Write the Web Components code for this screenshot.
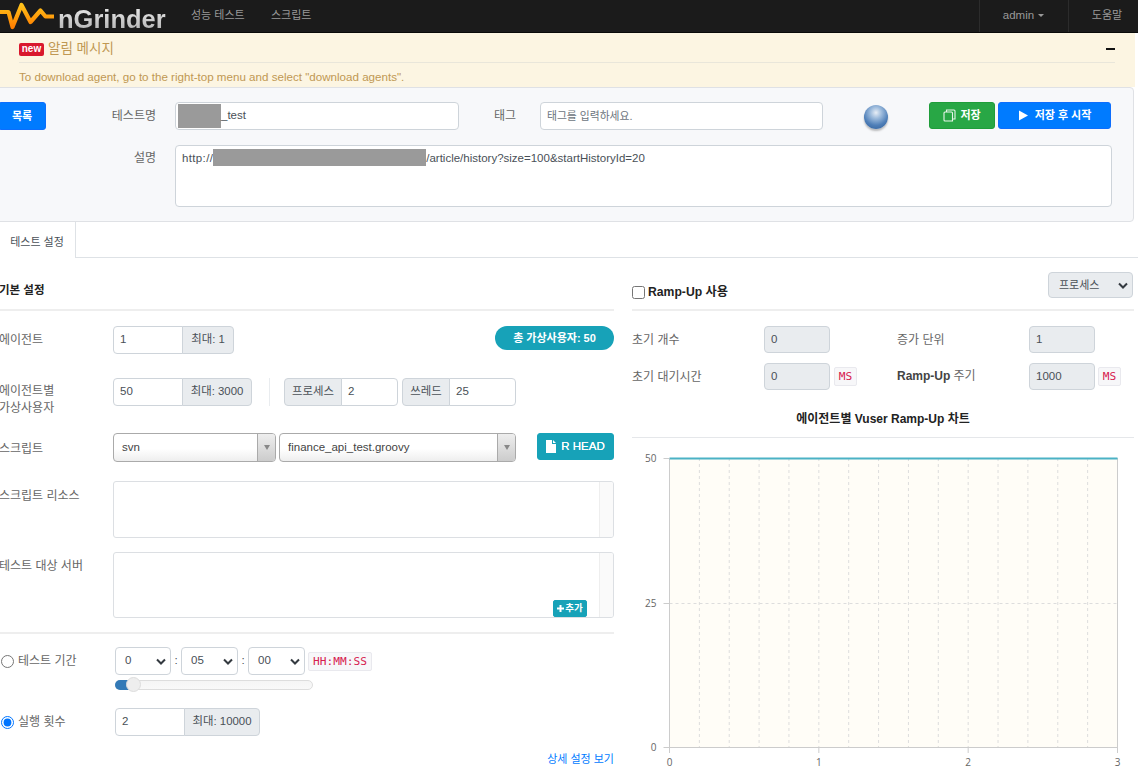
<!DOCTYPE html>
<html lang="ko">
<head>
<meta charset="utf-8">
<title>nGrinder</title>
<style>
html, body { margin: 0; height: 100%; overflow: hidden; background: #fff; }
body { width: 1138px; height: 774px; font: 11.5px/1.5 "Liberation Sans", "Noto Sans CJK KR", sans-serif; color: #495057; }
</style>
</head>
<body>
<ng-navbar></ng-navbar>
<ng-alert></ng-alert>
<ng-test-header></ng-test-header>
<ng-tabs></ng-tabs>
<ng-main>
  <ng-basic-settings slot="left"></ng-basic-settings>
  <ng-rampup-settings slot="right"></ng-rampup-settings>
</ng-main>

<script>
// Every element renders its own css + html into an open shadow root
class NgElement extends HTMLElement {
    connectedCallback() {
        if (this.shadowRoot) return;
        this.attachShadow({mode: 'open'});
        this.shadowRoot.innerHTML = `<style>:host, * { box-sizing: border-box; } ${this.css()}</style>${this.html()}`;
    }
    css() { return ''; }
    html() { return '<slot></slot>'; }
    attr(name, fallback = '') { return this.getAttribute(name) ?? fallback; }
}

const CHEVRON = `<svg width="10" height="7" viewBox="0 0 10 7"><path d="M1 1.5 L5 5.5 L9 1.5" fill="none" stroke="#343a40" stroke-width="2"/></svg>`;

class NgNavbar extends NgElement {
    css() {
        return `
:host { display: flex; align-items: stretch; height: 33px; background: #1b1b1b; border-bottom: 1px solid #0a0a0a; color: #999; position: relative; overflow: hidden; }
.logo { display: flex; width: 191px; align-items: center; position: relative; }
.logo svg { flex: none; }
.logo b { font-size: 25.5px; line-height: 33px; margin: 6px 0 0 4px; background: linear-gradient(#f2f2f2, #a9a9a9); -webkit-background-clip: text; background-clip: text; color: transparent; }
.nav { line-height: 31px; font-size: 11px; }
.nav.first { width: 80px; }
.spacer { flex: 1; }
.cell { border-left: 1px solid #2c2c2c; line-height: 31px; text-align: center; }
.admin { width: 89px; padding-right: 1px; }
.help { width: 70px; padding-left: 7px; font-size: 11px; }
.caret { display: inline-block; border: 3px solid transparent; border-top-color: #999; border-bottom: 0; margin-left: 4px; vertical-align: 2px; }`;
    }
    html() {
        return `
<div class="logo">
  <svg width="54" height="32" viewBox="0 0 54 32">
    <defs><linearGradient id="wave" x1="0" y1="0" x2="0" y2="1"><stop offset="0" stop-color="#ffc21a"/><stop offset="1" stop-color="#ff7f00"/></linearGradient></defs>
    <path d="M0 12 H8.5 L12.5 27 L21.5 5 L30.5 22 L40.5 10.5 L45.5 16.5 H54" fill="none" stroke="url(#wave)" stroke-width="4.2" stroke-linejoin="round"/>
  </svg>
  <b>nGrinder</b>
</div>
<div class="nav first">성능 테스트</div>
<div class="nav">스크립트</div>
<div class="spacer"></div>
<div class="cell admin">admin<span class="caret"></span></div>
<div class="cell help">도움말</div>`;
    }
}

class NgAlert extends NgElement {
    css() {
        return `
:host { display: block; width: 1135px; height: 54px; background: #fcf5e2; color: #c09853; padding: 0 20px 0 19px; }
.head { display: flex; align-items: center; height: 30px; border-bottom: 1px solid #e9e6da; padding-top: 3px; }
.badge { background: #d9182d; color: #fff; font: bold 10px/12px "Liberation Sans", sans-serif; width: 25px; height: 13px; border-radius: 2px; text-align: center; margin-right: 4px; }
.title { font-size: 13.5px; flex: 1; }
.min { width: 9px; height: 2px; background: #111; }
.msg { line-height: 28px; font-size: 11.6px; white-space: nowrap; }`;
    }
    html() {
        return `
<div class="head"><span class="badge">new</span><span class="title">알림 메시지</span><span class="min"></span></div>
<div class="msg">To download agent, go to the right-top menu and select "download agents".</div>`;
    }
}

class NgBox extends NgElement {
    css() {
        return `
:host { display: flex; flex: none; align-items: center; width: var(--w, 100px); height: var(--h, 28px); background: #fff; border: 1px solid #ced4da; border-radius: 4px; padding: 0 6px; color: #495057; white-space: nowrap; overflow: hidden; }
:host([disabled]) { background: #e9ecef; }
:host([area]) { align-items: flex-start; padding-top: 3px; }`;
    }
}

class NgInputGroup extends NgElement {
    css() {
        return `
:host { display: flex; flex: none; height: 28px; }
div { display: flex; align-items: center; border: 1px solid #ced4da; white-space: nowrap; }
.value { background: #fff; padding-left: 6px; color: #495057; }
.addon { background: #e9ecef; justify-content: center; color: #495057; font-size: 11.4px; }
.first { border-radius: 4px 0 0 4px; }
.last { border-radius: 0 4px 4px 0; margin-left: -1px; }`;
    }
    html() {
        const value = `style="width:${this.attr('value-width')}px"`;
        const addon = `style="width:${this.attr('addon-width')}px"`;
        if (this.hasAttribute('addon-first')) {
            return `<div class="addon first" ${addon}>${this.attr('addon')}</div><div class="value last" ${value}>${this.attr('value')}</div>`;
        }
        return `<div class="value first" ${value}>${this.attr('value')}</div><div class="addon last" ${addon}>${this.attr('addon')}</div>`;
    }
}

class NgButton extends NgElement {
    css() {
        return `
:host { display: inline-flex; flex: none; align-items: center; justify-content: center; gap: 4px; height: 28px; width: var(--w, auto); border-radius: 3px; color: #fff; font-weight: bold; font-size: 11px; white-space: nowrap; background: #007bff; border: 1px solid #0d6efd; }
:host([variant=green]) { background: #28a745; border-color: #1f9d3a; }
:host([variant=info]) { background: #17a2b8; border-color: #17a2b8; }`;
    }
    html() { return `<slot></slot>`; }
}

// select2 look: grey gradient box with a boxed arrow on the right
class NgSelect2 extends NgElement {
    css() {
        return `
:host { display: flex; flex: none; width: var(--w); height: 29px; border: 1px solid #aaa; border-radius: 4px; background: linear-gradient(#fff 55%, #eee); overflow: hidden; color: #444; }
.text { flex: 1; line-height: 27px; padding-left: 8px; }
.arrow { width: 18px; border-left: 1px solid #aaa; background: linear-gradient(#eee, #ccc); display: flex; align-items: center; justify-content: center; }
.arrow i { border: 3px solid transparent; border-top: 5px solid #888; border-bottom: 0; }`;
    }
    html() { return `<div class="text"><slot></slot></div><div class="arrow"><i></i></div>`; }
}

class NgSelect extends NgElement {
    css() {
        return `
:host { display: flex; flex: none; align-items: center; justify-content: space-between; width: var(--w); height: var(--h, 28px); background: var(--bg, #fff); border: 1px solid #ced4da; border-radius: 4px; padding: 0 4px 0 var(--pad, 9px); color: #495057; font-size: var(--fs, 11.5px); }
svg { display: block; }`;
    }
    html() { return `<span><slot></slot></span>${CHEVRON}`; }
}

class NgCode extends NgElement {
    css() {
        return `
:host { display: inline-flex; flex: none; align-items: center; justify-content: center; height: 19px; padding: 0 4px; background: #f7f7f9; border: 1px solid #e9e9ee; border-radius: 2px; color: #d6204e; font: 11.2px "DejaVu Sans Mono", "Liberation Mono", monospace; }`;
    }
}

class NgTestHeader extends NgElement {
    css() {
        return `
:host { display: block; margin-left: -10px; width: 1144px; height: 135px; background: #f7f8fa; border: 1px solid #dfe1e5; border-radius: 4px; padding-top: 14px; }
.row { display: flex; align-items: flex-start; }
.row + .row { margin-top: 15px; }
.list { margin-left: 7px; --w: 48px; }
label { color: #666; font-size: 12px; line-height: 28px; text-align: right; flex: none; }
.name { width: 110px; margin-right: 19px; }
.tag { width: 57px; margin-right: 24px; }
.placeholder { color: #6c757d; font-size: 10.8px; }
.mask { display: inline-block; background: #9a9a9a; }
.mask.a { width: 43px; height: 24px; margin-left: -4px; }
.mask.b { width: 213px; height: 17px; vertical-align: -4px; }
.proto { letter-spacing: .35px; }
.ball { flex: none; width: 24px; height: 24px; margin: 3px 41px 0; border-radius: 50%; background: radial-gradient(circle at 50% 32%, #e8eef6 0, #9dbbdc 28%, #4f7fb8 62%, #2f5c96 100%); box-shadow: 0 2px 2px rgba(0,0,0,.25); }
svg { display: block; }
.gap { width: 3px; flex: none; }`;
    }
    html() {
        return `
<div class="row">
  <ng-button class="list">목록</ng-button>
  <label class="name">테스트명</label>
  <ng-box style="--w:284px"><span class="mask a"></span>_test</ng-box>
  <label class="tag">태그</label>
  <ng-box style="--w:283px"><span class="placeholder">태그를 입력하세요.</span></ng-box>
  <div class="ball"></div>
  <ng-button variant="green" style="--w:66px;height:27px">
    <svg width="13" height="13" viewBox="0 0 13 13"><path d="M3.5 3 V1 H11 Q12 1 12 2 V10 H9.5 M1 4 Q1 3 2 3 H8.5 Q9.5 3 9.5 4 V12 H2 Q1 12 1 11 Z" fill="none" stroke="#e8f5ea" stroke-width="1.1"/></svg>
    저장
  </ng-button>
  <div class="gap"></div>
  <ng-button style="--w:113px;height:27px">
    <svg width="11" height="11" viewBox="0 0 11 11" style="margin-right:2px"><path d="M1 0.5 L10 5.5 L1 10.5 Z" fill="#fff"/></svg>
    저장 후 시작
  </ng-button>
</div>
<div class="row">
  <label class="name" style="margin-left:55px;line-height:26px">설명</label>
  <ng-box area style="--w:937px;--h:62px;"><span><span class="proto">http://</span><span class="mask b"></span>/article/history?size=100&amp;startHistoryId=20</span></ng-box>
</div>`;
    }
}

class NgTabs extends NgElement {
    css() {
        return `
:host { display: block; height: 36px; border-bottom: 1px solid #dee2e6; }
div { width: 76px; height: 36px; background: #fff; border-right: 1px solid #dee2e6; text-align: center; line-height: 40px; color: #495057; padding-right: 1px; font-size: 11px; }`;
    }
    html() { return `<div>테스트 설정</div>`; }
}

class NgMain extends NgElement {
    css() {
        return `
:host { display: flex; gap: 18px; width: 1134px; }
.left { width: 614px; flex: none; }
.right { width: 502px; flex: none; }`;
    }
    html() { return `<div class="left"><slot name="left"></slot></div><div class="right"><slot name="right"></slot></div>`; }
}

class NgRow extends NgElement {
    css() {
        return `
:host { display: flex; align-items: flex-start; }
.label { flex: none; width: var(--label, 113px); margin-left: -1px; padding-top: var(--label-top, 5px); line-height: var(--label-lh, 18px); color: #666; font-size: 12px; white-space: pre-line; }
.body { flex: 1; display: flex; align-items: center; min-width: 0; margin-left: 1px; position: relative; }`;
    }
    html() { return `<div class="label">${this.attr('label')}</div><div class="body"><slot></slot></div>`; }
}

class NgBasicSettings extends NgElement {
    css() {
        return `
:host { display: block; }
.head { height: 53px; border-bottom: 2px solid #eee; font-weight: bold; font-size: 11.5px; color: #222; padding-top: 23px; line-height: 18px; text-indent: -1px; }
.total { margin-left: auto; width: 119px; height: 24px; border-radius: 12px; background: #17a2b8; color: #fff; font-weight: bold; font-size: 11px; text-align: center; line-height: 24px; align-self: flex-start; }
.sep { width: 1px; height: 28px; background: #e9ecef; margin: 0 14px 0 17px; flex: none; }
hr { border: 0; height: 2px; background: #eee; margin: 14px 0 13px; }
.resource { width: 501px; height: 57px; flex: none; border: 1px solid #dcdfe3; border-radius: 3px; display: flex; justify-content: flex-end; overflow: hidden; }
.resource i { width: 14px; border-left: 1px solid #eee; background: #fafafa; }
.add { position: absolute; right: 27px; bottom: 1px; --w: 34px; height: 17px; font-size: 9.5px; border-radius: 2px; gap: 1px; }
.colon { width: 10px; text-align: center; flex: none; }
.time { display: flex; align-items: center; }
.slider { position: relative; width: 198px; height: 10px; margin-top: 5px; border: 1px solid #ddd; border-radius: 5px; background: linear-gradient(#f5f5f5, #f9f9f9); }
.slider i { position: absolute; left: -1px; top: -1px; height: 10px; width: 16px; background: #337ab7; border-radius: 5px 0 0 5px; }
.slider b { position: absolute; left: 10px; top: -4px; width: 15px; height: 15px; border-radius: 50%; background: #eee; border: 1px solid #ddd; }
.radio { display: flex; align-items: center; gap: 4px; width: 115px; padding-left: 1px; color: #666; font-size: 12px; }
.radio input { margin: 0; width: 13px; height: 13px; flex: none; }
.flexrow { display: flex; align-items: flex-start; }
.link { text-align: right; color: #007bff; font-size: 11px; margin-top: 14px; line-height: 18px; }`;
    }
    html() {
        return `
<div class="head">기본 설정</div>
<ng-row label="에이전트" style="margin-top:15px;--label-top:5px">
  <ng-input-group value="1" addon="최대: 1" value-width="70" addon-width="52"></ng-input-group>
  <div class="total">총 가상사용자: 50</div>
</ng-row>
<ng-row label="에이전트별&#10;가상사용자" style="margin-top:24px;height:28px;--label-top:5px;--label-lh:17px">
  <ng-input-group value="50" addon="최대: 3000" value-width="70" addon-width="70"></ng-input-group>
  <div class="sep"></div>
  <ng-input-group addon-first addon="프로세스" value="2" addon-width="58" value-width="57"></ng-input-group>
  <div style="width:4px;flex:none"></div>
  <ng-input-group addon-first addon="쓰레드" value="25" addon-width="48" value-width="67"></ng-input-group>
</ng-row>
<ng-row label="스크립트" style="margin-top:27px;--label-top:7px">
  <ng-select2 style="--w:163px">svn</ng-select2>
  <div style="width:3px;flex:none"></div>
  <ng-select2 style="--w:237px">finance_api_test.groovy</ng-select2>
  <ng-button variant="info" style="margin-left:21px;--w:77px;height:27px;align-self:flex-start;gap:5px">
    <svg width="10" height="13" viewBox="0 0 10 13"><path d="M0 0 H6 V4 H10 V13 H0 Z M7 0 L10 3 H7 Z" fill="#fff"/></svg>
    <span style="font-weight:normal;font-size:11.5px;text-shadow:0 0 .4px #fff">R HEAD</span>
  </ng-button>
</ng-row>
<ng-row label="스크립트 리소스" style="margin-top:19px;--label-top:6px">
  <div class="resource"><i></i></div>
</ng-row>
<ng-row label="테스트 대상 서버" style="margin-top:14px">
  <div class="resource" style="height:66px"><i></i></div>
  <ng-button class="add" variant="info">
    <svg width="7" height="7" viewBox="0 0 7 7"><path d="M3.5 0 V7 M0 3.5 H7" stroke="#fff" stroke-width="2"/></svg>추가
  </ng-button>
</ng-row>
<hr>
<div class="flexrow" style="height:45px">
  <label class="radio" style="height:28px"><input type="radio" name="limit">테스트 기간</label>
  <div>
    <div class="time">
      <ng-select style="--w:56px">0</ng-select><span class="colon">:</span>
      <ng-select style="--w:57px">05</ng-select><span class="colon">:</span>
      <ng-select style="--w:57px">00</ng-select>
      <ng-code style="margin-left:3px;width:64px">HH:MM:SS</ng-code>
    </div>
    <div class="slider"><i></i><b></b></div>
  </div>
</div>
<div class="flexrow" style="margin-top:16px">
  <label class="radio" style="height:28px"><input type="radio" name="limit" checked>실행 횟수</label>
  <ng-input-group value="2" addon="최대: 10000" value-width="70" addon-width="76"></ng-input-group>
</div>
<div class="link">상세 설정 보기</div>`;
    }
}

class NgRampupSettings extends NgElement {
    css() {
        return `
:host { display: block; }
.head { display: flex; justify-content: space-between; height: 53px; border-bottom: 2px solid #eee; padding-top: 14px; }
.use { display: flex; align-items: center; gap: 3px; height: 26px; margin-top: 7px; font-weight: bold; font-size: 12.2px; color: #222; }
.use input { margin: 0; width: 13px; height: 13px; }
.grid { display: grid; grid-template-columns: 132px 66px 4px 23px 40px 132px 66px 3px 23px; align-items: center; grid-auto-rows: 27px; row-gap: 10px; margin-top: 15px; }
.grid span { color: #666; font-size: 12px; }
.grid b { color: #444; font-size: 12px; }
.title { text-align: center; font-weight: bold; font-size: 12px; color: #222; margin-top: 20px; height: 28px; line-height: 18px; border-bottom: 1px solid #e5e7ea; }`;
    }
    html() {
        return `
<div class="head">
  <label class="use"><input type="checkbox">Ramp-Up 사용</label>
  <ng-select style="--w:85px;--h:26px;--bg:#e9ecef;--pad:10px;--fs:11px;margin-right:1px">프로세스</ng-select>
</div>
<div class="grid">
  <span>초기 개수</span><ng-box disabled style="--w:66px;--h:27px">0</ng-box><i></i><i></i><i></i>
  <span>증가 단위</span><ng-box disabled style="--w:66px;--h:27px">1</ng-box><i></i><i></i>
  <span>초기 대기시간</span><ng-box disabled style="--w:66px;--h:27px">0</ng-box><i></i><ng-code style="padding:0">MS</ng-code><i></i>
  <div><b>Ramp-Up</b> <span>주기</span></div><ng-box disabled style="--w:66px;--h:27px">1000</ng-box><i></i><ng-code style="padding:0">MS</ng-code>
</div>
<div class="title">에이전트별 Vuser Ramp-Up 차트</div>
<ng-rampup-chart></ng-rampup-chart>`;
    }
}

class NgRampupChart extends NgElement {
    css() {
        return `
:host { display: block; height: 336px; }
svg { display: block; }
text { font: 10px "Open Sans", "Liberation Sans", sans-serif; fill: #666; }`;
    }
    html() {
        // coordinates are relative to the top left of the chart box (x 632, y 438)
        const x0 = 37.5, x1 = 485.5, top = 20, mid = 165, bottom = 309;
        let grid = '';
        for (let i = 1; i < 15; i++) {
            const x = x0 + (x1 - x0) * i / 15;
            grid += `<path d="M${x} ${top} V${bottom}" stroke="#ddd" stroke-dasharray="3 3"/>`;
        }
        grid += `<path d="M${x0} ${mid + .5} H${x1}" stroke="#ddd" stroke-dasharray="3 3"/>`;
        let labels = '';
        [[50, top], [25, mid], [0, bottom]].forEach(([v, y]) => {
            labels += `<text x="${x0 - 13}" y="${y + 3.5}" text-anchor="end">${v}</text><path d="M${x0 - 6} ${y + .5} H${x0}" stroke="#ccc"/>`;
        });
        [0, 1, 2, 3].forEach(v => {
            const x = x0 + (x1 - x0) * v / 3;
            labels += `<text x="${x}" y="327.5" text-anchor="middle">${v}</text><path d="M${x} ${bottom} V${bottom + 6}" stroke="#ccc"/>`;
        });
        return `
<svg width="502" height="336" viewBox="0 0 502 336">
  <rect x="${x0}" y="${top}" width="${x1 - x0}" height="${bottom - top}" fill="#fffdf7"/>
  ${grid}
  <path d="M${x0} ${bottom + .5} H${x1} M${x0} ${top} V${bottom} M${x1} ${top} V${bottom}" stroke="#ccc" fill="none"/>
  <path d="M${x0} ${top + .5} H${x1}" stroke="#4bb2c5" stroke-width="2"/>
  ${labels}
</svg>`;
    }
}

const elements = {
    'ng-box': NgBox, 'ng-input-group': NgInputGroup, 'ng-button': NgButton, 'ng-select2': NgSelect2,
    'ng-select': NgSelect, 'ng-code': NgCode, 'ng-row': NgRow, 'ng-rampup-chart': NgRampupChart,
    'ng-navbar': NgNavbar, 'ng-alert': NgAlert, 'ng-test-header': NgTestHeader, 'ng-tabs': NgTabs,
    'ng-main': NgMain, 'ng-basic-settings': NgBasicSettings, 'ng-rampup-settings': NgRampupSettings
};
Object.keys(elements).forEach(name => customElements.define(name, elements[name]));
</script>
</body>
</html>
